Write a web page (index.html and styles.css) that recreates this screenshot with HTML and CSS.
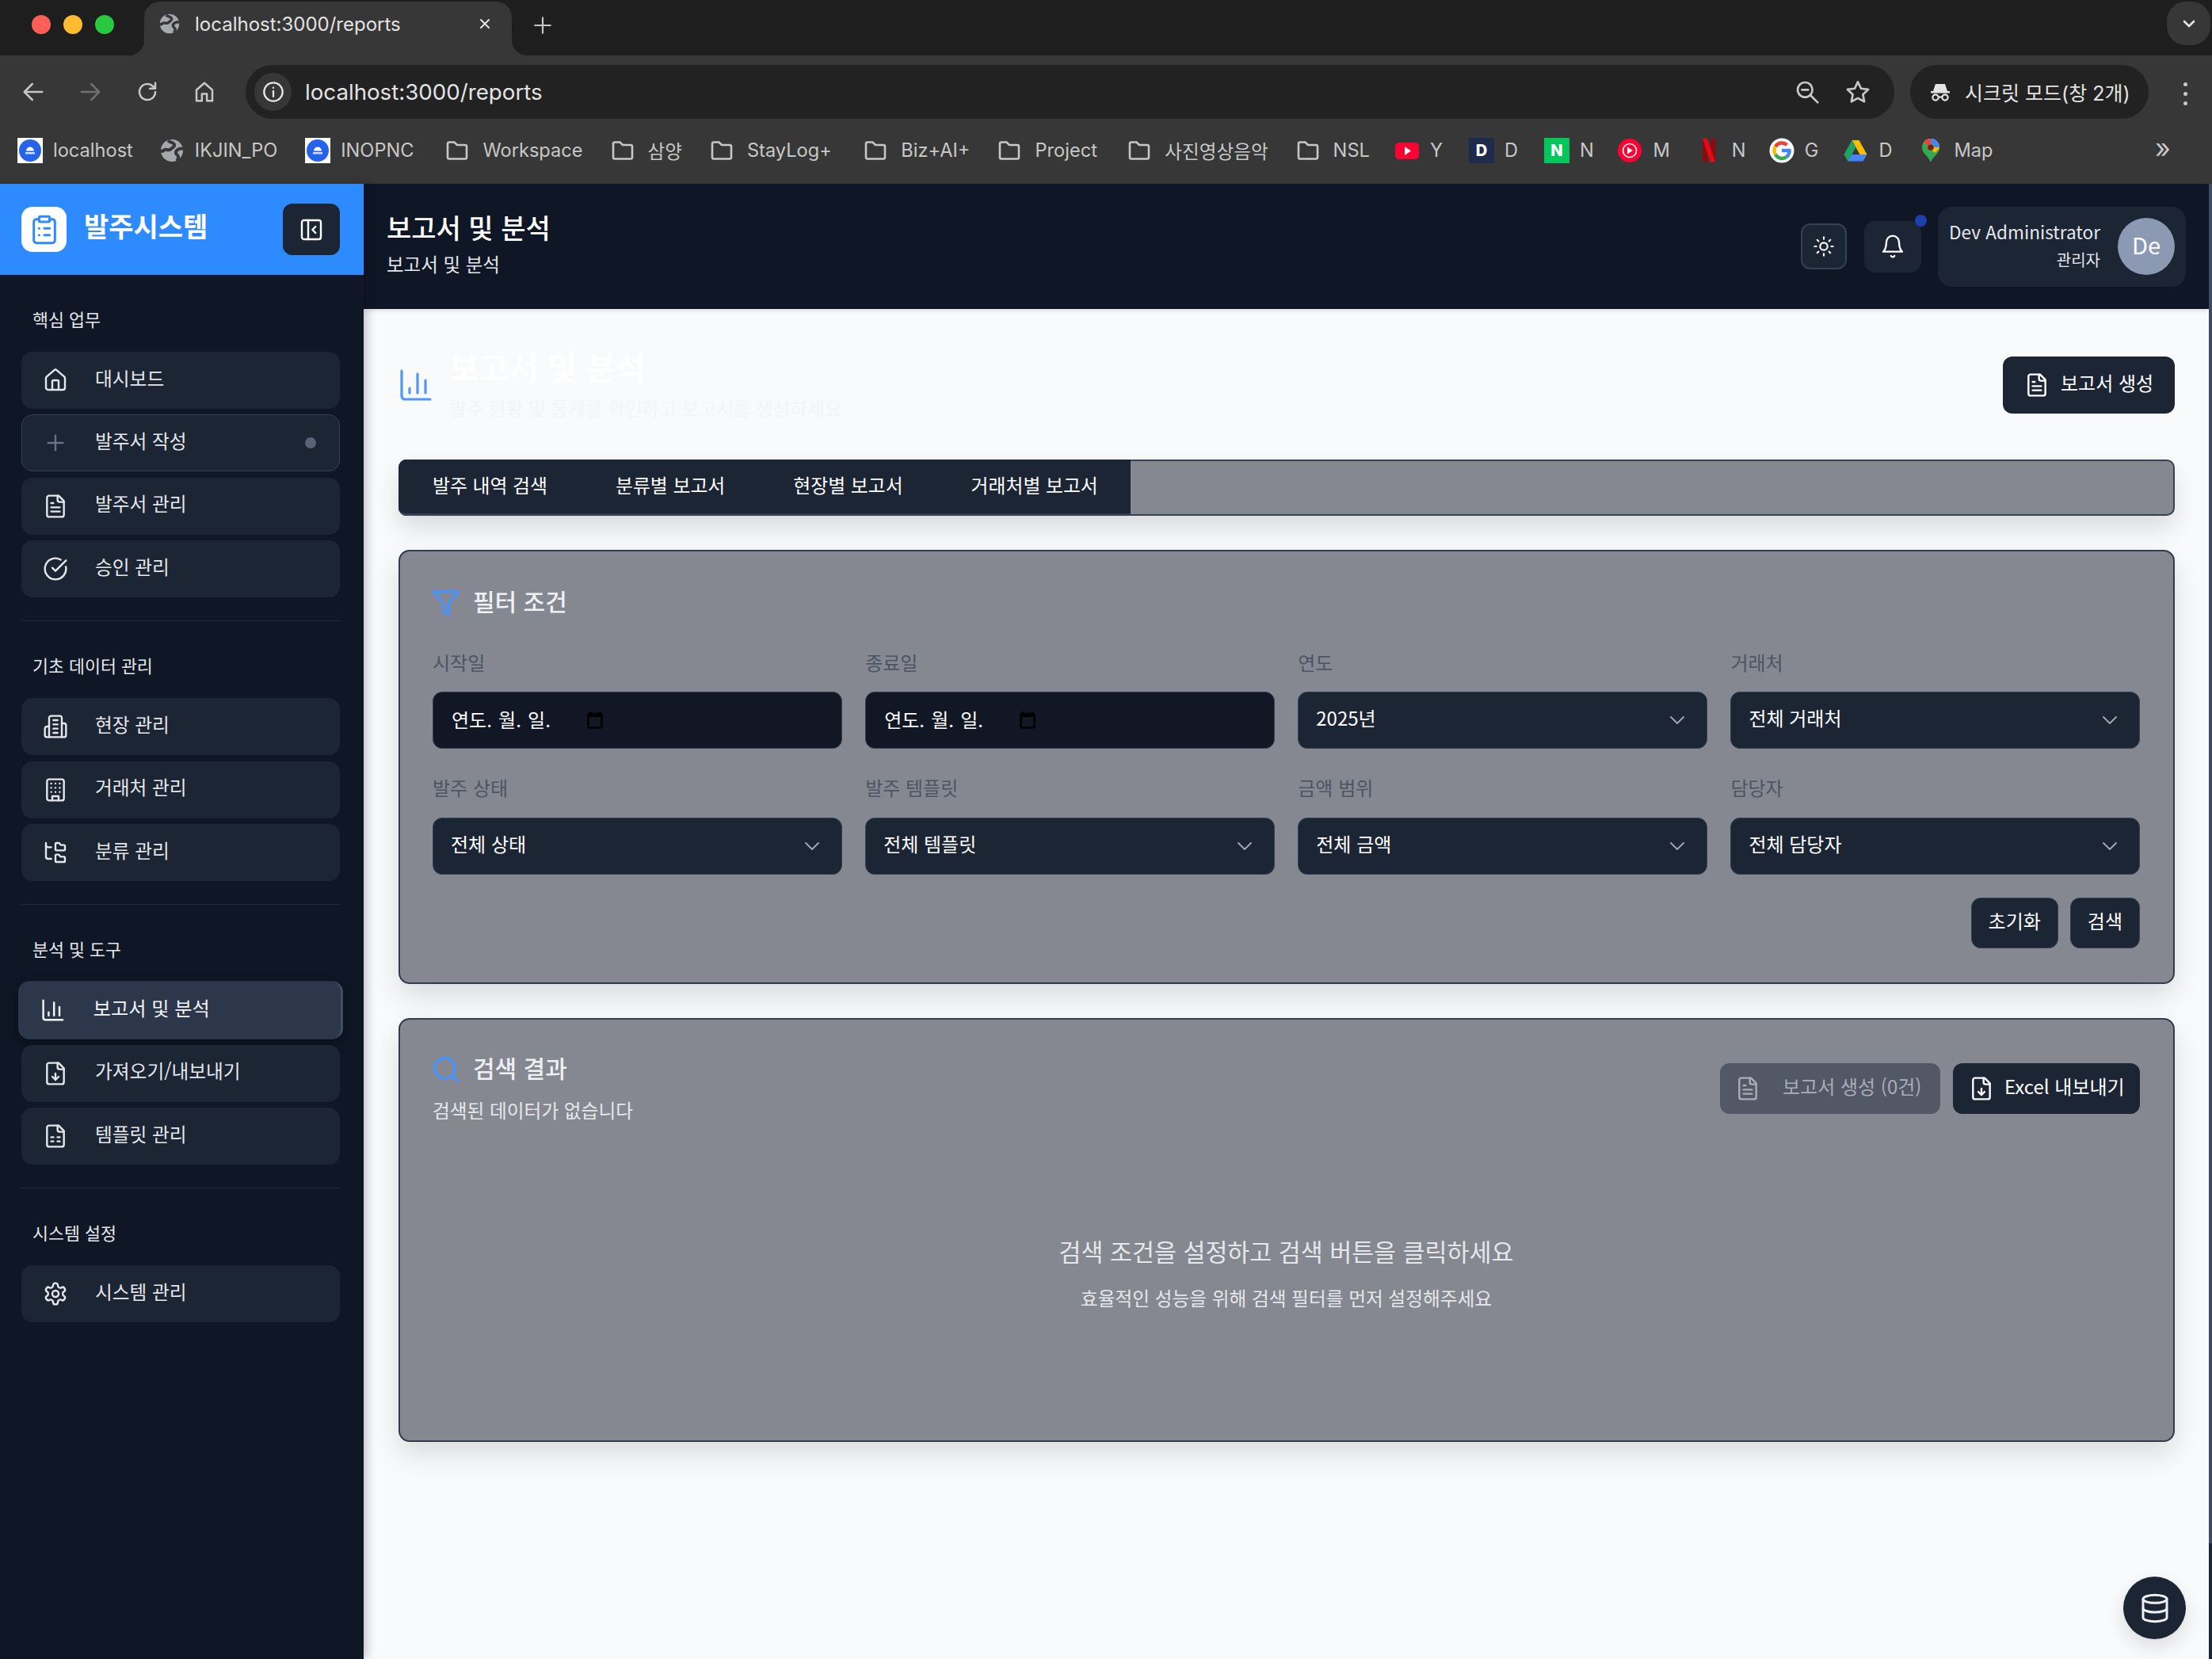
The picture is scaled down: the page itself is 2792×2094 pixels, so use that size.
FILE: index.html
```html
<!DOCTYPE html>
<html lang="ko">
<head>
<meta charset="utf-8">
<title>localhost:3000/reports</title>
<link rel="stylesheet" href="styles.css">
</head>
<body>
<svg class="defs" width="0" height="0">
  <symbol id="i-home" viewBox="0 0 24 24"><path d="M15 21v-8a1 1 0 0 0-1-1h-4a1 1 0 0 0-1 1v8"/><path d="M3 10a2 2 0 0 1 .709-1.528l7-5.999a2 2 0 0 1 2.582 0l7 5.999A2 2 0 0 1 21 10v9a2 2 0 0 1-2 2H5a2 2 0 0 1-2-2z"/></symbol>
  <symbol id="i-plus" viewBox="0 0 24 24"><path d="M5 12h14"/><path d="M12 5v14"/></symbol>
  <symbol id="i-file" viewBox="0 0 24 24"><path d="M15 2H6a2 2 0 0 0-2 2v16a2 2 0 0 0 2 2h12a2 2 0 0 0 2-2V7Z"/><path d="M14 2v4a2 2 0 0 0 2 2h4"/><path d="M10 9H8"/><path d="M16 13H8"/><path d="M16 17H8"/></symbol>
  <symbol id="i-check" viewBox="0 0 24 24"><path d="M21.801 10A10 10 0 1 1 17 3.335"/><path d="m9 11 3 3L22 4"/></symbol>
  <symbol id="i-building2" viewBox="0 0 24 24"><path d="M6 22V4a2 2 0 0 1 2-2h8a2 2 0 0 1 2 2v18Z"/><path d="M6 12H4a2 2 0 0 0-2 2v6a2 2 0 0 0 2 2h2"/><path d="M18 9h2a2 2 0 0 1 2 2v9a2 2 0 0 1-2 2h-2"/><path d="M10 6h4"/><path d="M10 10h4"/><path d="M10 14h4"/><path d="M10 18h4"/></symbol>
  <symbol id="i-building" viewBox="0 0 24 24"><rect width="16" height="20" x="4" y="2" rx="2" ry="2"/><path d="M9 22v-4h6v4"/><path d="M8 6h.01"/><path d="M16 6h.01"/><path d="M12 6h.01"/><path d="M12 10h.01"/><path d="M12 14h.01"/><path d="M16 10h.01"/><path d="M16 14h.01"/><path d="M8 10h.01"/><path d="M8 14h.01"/></symbol>
  <symbol id="i-tree" viewBox="0 0 24 24"><path d="M20 10a1 1 0 0 0 1-1V6a1 1 0 0 0-1-1h-2.5a1 1 0 0 1-.8-.4l-.9-1.2A1 1 0 0 0 15 3h-2a1 1 0 0 0-1 1v5a1 1 0 0 0 1 1Z"/><path d="M20 21a1 1 0 0 0 1-1v-3a1 1 0 0 0-1-1h-2.9a1 1 0 0 1-.88-.55l-.42-.85a1 1 0 0 0-.92-.6H13a1 1 0 0 0-1 1v5a1 1 0 0 0 1 1Z"/><path d="M3 5a2 2 0 0 0 2 2h3"/><path d="M3 3v13a2 2 0 0 0 2 2h3"/></symbol>
  <symbol id="i-chart" viewBox="0 0 24 24"><path d="M3 3v16a2 2 0 0 0 2 2h16"/><path d="M18 17V9"/><path d="M13 17V5"/><path d="M8 17v-3"/></symbol>
  <symbol id="i-filedown" viewBox="0 0 24 24"><path d="M15 2H6a2 2 0 0 0-2 2v16a2 2 0 0 0 2 2h12a2 2 0 0 0 2-2V7Z"/><path d="M14 2v4a2 2 0 0 0 2 2h4"/><path d="M12 18v-6"/><path d="m9 15 3 3 3-3"/></symbol>
  <symbol id="i-filesheet" viewBox="0 0 24 24"><path d="M15 2H6a2 2 0 0 0-2 2v16a2 2 0 0 0 2 2h12a2 2 0 0 0 2-2V7Z"/><path d="M14 2v4a2 2 0 0 0 2 2h4"/><path d="M8 13h2"/><path d="M14 13h2"/><path d="M8 17h2"/><path d="M14 17h2"/></symbol>
  <symbol id="i-gear" viewBox="0 0 24 24"><path d="M12.22 2h-.44a2 2 0 0 0-2 2v.18a2 2 0 0 1-1 1.73l-.43.25a2 2 0 0 1-2 0l-.15-.08a2 2 0 0 0-2.73.73l-.22.38a2 2 0 0 0 .73 2.73l.15.1a2 2 0 0 1 1 1.72v.51a2 2 0 0 1-1 1.74l-.15.09a2 2 0 0 0-.73 2.73l.22.38a2 2 0 0 0 2.73.73l.15-.08a2 2 0 0 1 2 0l.43.25a2 2 0 0 1 1 1.73V20a2 2 0 0 0 2 2h.44a2 2 0 0 0 2-2v-.18a2 2 0 0 1 1-1.73l.43-.25a2 2 0 0 1 2 0l.15.08a2 2 0 0 0 2.73-.73l.22-.39a2 2 0 0 0-.73-2.73l-.15-.08a2 2 0 0 1-1-1.74v-.5a2 2 0 0 1 1-1.74l.15-.09a2 2 0 0 0 .73-2.73l-.22-.38a2 2 0 0 0-2.73-.73l-.15.08a2 2 0 0 1-2 0l-.43-.25a2 2 0 0 1-1-1.73V4a2 2 0 0 0-2-2z"/><circle cx="12" cy="12" r="3"/></symbol>
  <symbol id="i-clipboard" viewBox="0 0 24 24"><rect width="8" height="4" x="8" y="2" rx="1" ry="1"/><path d="M16 4h2a2 2 0 0 1 2 2v14a2 2 0 0 1-2 2H6a2 2 0 0 1-2-2V6a2 2 0 0 1 2-2h2"/><path d="M12 11h4"/><path d="M12 16h4"/><path d="M8 11h.01"/><path d="M8 16h.01"/></symbol>
  <symbol id="i-panel" viewBox="0 0 24 24"><rect width="18" height="18" x="3" y="3" rx="2"/><path d="M9 3v18"/><path d="m16 15-3-3 3-3"/></symbol>
  <symbol id="i-sun" viewBox="0 0 24 24"><circle cx="12" cy="12" r="4"/><path d="M12 2v2"/><path d="M12 20v2"/><path d="m4.93 4.93 1.41 1.41"/><path d="m17.66 17.66 1.41 1.41"/><path d="M2 12h2"/><path d="M20 12h2"/><path d="m6.34 17.66-1.41 1.41"/><path d="m19.07 4.93-1.41 1.41"/></symbol>
  <symbol id="i-bell" viewBox="0 0 24 24"><path d="M6 8a6 6 0 0 1 12 0c0 7 3 9 3 9H3s3-2 3-9"/><path d="M10.3 21a1.94 1.94 0 0 0 3.4 0"/></symbol>
  <symbol id="i-filter" viewBox="0 0 24 24"><polygon points="22 3 2 3 10 12.46 10 19 14 21 14 12.46 22 3"/></symbol>
  <symbol id="i-search" viewBox="0 0 24 24"><circle cx="11" cy="11" r="8"/><path d="m21 21-4.3-4.3"/></symbol>
  <symbol id="i-db" viewBox="0 0 24 24"><ellipse cx="12" cy="5" rx="9" ry="3"/><path d="M3 5V19A9 3 0 0 0 21 19V5"/><path d="M3 12A9 3 0 0 0 21 12"/></symbol>
  <symbol id="i-chev" viewBox="0 0 24 24"><path d="m6 9 6 6 6-6"/></symbol>
  <symbol id="i-folder" viewBox="0 0 32 32"><path d="M5 7.5a2 2 0 0 1 2-2h6.5l3.5 3.5h10a2 2 0 0 1 2 2v13.500a2 2 0 0 1-2 2H7a2 2 0 0 1-2-2z"/></symbol>
  <symbol id="i-globe" viewBox="0 0 32 32"><circle cx="16" cy="16" r="14" fill="#a5a9ae"/><path d="M11 3.500c3 2.500 7 2 8 5s-3 4-5 6-6-1-8 1-3 2-4.500 0M30 14c-3-1-6 0-8 2s-1 4 1 6 1 5-1 7" fill="none" stroke="#373737" stroke-width="4"/></symbol>
  <symbol id="i-local" viewBox="0 0 32 32"><rect width="32" height="32" fill="#fff"/><circle cx="16" cy="16" r="14" fill="#2563eb"/><path d="M11 16.500a5 5 0 0 1 10 0z" fill="#fff"/><rect x="10" y="18" width="12" height="2.500" fill="#cfe0ff"/></symbol>
</svg>

<header class="tabstrip">
  <div class="lights"><span class="light red"></span><span class="light amber"></span><span class="light green"></span></div>
  <div class="tab">
    <svg class="fav"><use href="#i-globe"/></svg>
    <span class="tab-title">localhost:3000/reports</span>
    <svg class="tab-x icon" viewBox="0 0 24 24"><path d="M6 6l12 12M18 6 6 18"/></svg>
  </div>
  <svg class="tab-new icon" viewBox="0 0 24 24"><path d="M12 3v18M3 12h18"/></svg>
  <div class="tab-menu"><svg class="icon" viewBox="0 0 24 24"><path d="m6 9 6 6 6-6"/></svg></div>
</header>

<section class="toolbar">
  <div class="navrow">
    <svg class="nav icon" viewBox="0 0 24 24"><path d="M21 12H4M11 4l-8 8 8 8"/></svg>
    <svg class="nav icon dim" viewBox="0 0 24 24"><path d="M3 12h17M13 4l8 8-8 8"/></svg>
    <svg class="nav icon" viewBox="0 0 24 24"><path d="M20 12a8 8 0 1 1-2.500-5.800L20 8.500M20 3v5.500h-5.500"/></svg>
    <svg class="nav icon" viewBox="0 0 24 24"><path d="M4 21V10l8-7 8 7v11h-5.500v-7h-5v7z"/></svg>
    <div class="omni">
      <span class="omni-info"><svg class="icon" viewBox="0 0 24 24"><circle cx="12" cy="12" r="10"/><path d="M12 11v6M12 7.500v.01"/></svg></span>
      <span class="omni-url">localhost:3000/reports</span>
      <svg class="omni-act icon" viewBox="0 0 24 24"><circle cx="10" cy="10" r="7"/><path d="M7 10h6M15 15l7 7"/></svg>
      <svg class="omni-act star icon" viewBox="0 0 24 24"><path d="m12 2.500 3 6.300 6.800.9-5 4.700 1.300 6.800-6.100-3.300-6.100 3.300 1.300-6.800-5-4.700 6.800-.9z"/></svg>
    </div>
    <div class="incog">
      <svg class="incog-i" viewBox="0 0 28 28"><path d="M5 13 8 4h12l3 9z" fill="#e3e3e3"/><rect x="2" y="13" width="24" height="2.500" fill="#e3e3e3"/><circle cx="8" cy="21" r="3.600" fill="none" stroke="#e3e3e3" stroke-width="2.200"/><circle cx="20" cy="21" r="3.600" fill="none" stroke="#e3e3e3" stroke-width="2.200"/><path d="M11.500 20.500h5" stroke="#e3e3e3" stroke-width="2.200"/></svg>
      <span>시크릿 모드(창 2개)</span>
    </div>
    <div class="kebab"><i></i><i></i><i></i></div>
  </div>
  <nav class="bookmarks">
    <a class="bm"><svg class="bm-i"><use href="#i-local"/></svg>localhost</a>
    <a class="bm"><svg class="bm-i"><use href="#i-globe"/></svg>IKJIN_PO</a>
    <a class="bm"><svg class="bm-i"><use href="#i-local"/></svg>INOPNC</a>
    <a class="bm bm-folder"><svg class="bm-i folder"><use href="#i-folder"/></svg>Workspace</a>
    <a class="bm bm-folder"><svg class="bm-i folder"><use href="#i-folder"/></svg>삼양</a>
    <a class="bm bm-folder"><svg class="bm-i folder"><use href="#i-folder"/></svg>StayLog+</a>
    <a class="bm bm-folder"><svg class="bm-i folder"><use href="#i-folder"/></svg>Biz+AI+</a>
    <a class="bm bm-folder"><svg class="bm-i folder"><use href="#i-folder"/></svg>Project</a>
    <a class="bm bm-folder"><svg class="bm-i folder"><use href="#i-folder"/></svg>사진영상음악</a>
    <a class="bm bm-folder"><svg class="bm-i folder"><use href="#i-folder"/></svg>NSL</a>
    <a class="bm"><svg class="bm-i" viewBox="0 0 32 32"><rect x="1" y="6" width="30" height="21" rx="5" fill="#ff0033"/><path d="m13 11 8 5.500-8 5.500z" fill="#fff"/></svg>Y</a>
    <a class="bm"><span class="bm-i letter navy">D</span>D</a>
    <a class="bm"><span class="bm-i letter naver">N</span>N</a>
    <a class="bm"><svg class="bm-i" viewBox="0 0 32 32"><circle cx="16" cy="16" r="15" fill="#ff0033"/><circle cx="16" cy="16" r="8.500" fill="none" stroke="#fff" stroke-width="1.600"/><path d="m13 11.500 7 4.500-7 4.500z" fill="#fff"/></svg>M</a>
    <a class="bm"><svg class="bm-i" viewBox="0 0 32 32"><path d="M8 1h6v30l-6-1z" fill="#8f0a10"/><path d="M18 1h6v29l-6 1z" fill="#8f0a10"/><path d="M8 1h6l10 29-6 1z" fill="#e50914"/></svg>N</a>
    <a class="bm"><svg class="bm-i" viewBox="0 0 32 32"><circle cx="16" cy="16" r="15.500" fill="#fff"/><g fill="none" stroke-width="4.500"><path d="M8 11a9.500 9.500 0 0 1 14.500-2" stroke="#ea4335"/><path d="M8 11a9.500 9.500 0 0 0 0 10" stroke="#fbbc05"/><path d="M8 21a9.500 9.500 0 0 0 14 3" stroke="#34a853"/><path d="M22 24a9.500 9.500 0 0 0 3.500-8H16" stroke="#4285f4"/></g></svg>G</a>
    <a class="bm"><svg class="bm-i" viewBox="0 0 32 32"><path d="M11.500 3h9l10 18h-9z" fill="#fbbc04"/><path d="M11.500 3 1.500 21l5 8.500L16.500 12z" fill="#1fa463"/><path d="M6.500 29.500h19l5-8.500H11z" fill="#4285f4"/></svg>D</a>
    <a class="bm"><svg class="bm-i" viewBox="0 0 32 32"><path d="M16 1a11 11 0 0 0-11 11c0 8 8 11 11 19 3-8 11-11 11-19A11 11 0 0 0 16 1z" fill="#34a853"/><path d="M16 1a11 11 0 0 0-8.500 4L21 19c3-3 6-4 6-7A11 11 0 0 0 16 1z" fill="#fbbc04"/><path d="M16 1a11 11 0 0 1 11 11l-7 0a4 4 0 0 0-4-4z" fill="#4285f4"/><path d="M16 1a11 11 0 0 0-8.500 4l5.500 6a4 4 0 0 1 3-3z" fill="#ea4335"/><circle cx="16" cy="12" r="3.800" fill="#7a1c12"/></svg>Map</a>
    <span class="bm-more">»</span>
  </nav>
</section>

<div class="app">
  <aside class="sidebar">
    <div class="brand">
      <span class="logo"><svg class="icon logo-i"><use href="#i-clipboard"/></svg></span>
      <strong class="brand-name">발주시스템</strong>
      <span class="collapse"><svg class="icon i32"><use href="#i-panel"/></svg></span>
    </div>
    <nav class="menu">
      <section class="group">
        <h3 class="group-title">핵심 업무</h3>
        <ul class="items">
          <li class="item"><svg class="icon i32"><use href="#i-home"/></svg><span>대시보드</span></li>
          <li class="item outlined"><svg class="icon i32 muted"><use href="#i-plus"/></svg><span>발주서 작성</span><i class="item-dot"></i></li>
          <li class="item"><svg class="icon i32"><use href="#i-file"/></svg><span>발주서 관리</span></li>
          <li class="item"><svg class="icon i32"><use href="#i-check"/></svg><span>승인 관리</span></li>
        </ul>
      </section>
      <section class="group">
        <h3 class="group-title">기초 데이터 관리</h3>
        <ul class="items">
          <li class="item"><svg class="icon i32"><use href="#i-building2"/></svg><span>현장 관리</span></li>
          <li class="item"><svg class="icon i32"><use href="#i-building"/></svg><span>거래처 관리</span></li>
          <li class="item"><svg class="icon i32"><use href="#i-tree"/></svg><span>분류 관리</span></li>
        </ul>
      </section>
      <section class="group">
        <h3 class="group-title">분석 및 도구</h3>
        <ul class="items">
          <li class="item active"><svg class="icon i32"><use href="#i-chart"/></svg><span>보고서 및 분석</span></li>
          <li class="item"><svg class="icon i32"><use href="#i-filedown"/></svg><span>가져오기/내보내기</span></li>
          <li class="item"><svg class="icon i32"><use href="#i-filesheet"/></svg><span>템플릿 관리</span></li>
        </ul>
      </section>
      <section class="group last">
        <h3 class="group-title">시스템 설정</h3>
        <ul class="items">
          <li class="item"><svg class="icon i32"><use href="#i-gear"/></svg><span>시스템 관리</span></li>
        </ul>
      </section>
    </nav>
  </aside>

  <div class="main">
    <header class="topbar">
      <div class="topbar-titles">
        <h1 class="topbar-title">보고서 및 분석</h1>
        <p class="topbar-sub">보고서 및 분석</p>
      </div>
      <div class="topbar-actions">
        <span class="theme-btn"><svg class="icon i28"><use href="#i-sun"/></svg></span>
        <span class="bell-btn"><svg class="icon i32"><use href="#i-bell"/></svg><i class="bell-dot"></i></span>
        <div class="user">
          <div class="user-text"><span class="user-name">Dev Administrator</span><span class="user-role">관리자</span></div>
          <span class="avatar">De</span>
        </div>
      </div>
    </header>

    <main class="content">
      <div class="page-head">
        <svg class="icon page-icon"><use href="#i-chart"/></svg>
        <div class="page-titles">
          <h2 class="page-title">보고서 및 분석</h2>
          <p class="page-sub">발주 현황 및 통계를 확인하고 보고서를 생성하세요</p>
        </div>
        <button class="btn btn-head"><svg class="icon i32"><use href="#i-file"/></svg><span>보고서 생성</span></button>
      </div>

      <div class="tabs">
        <div class="tablist">
          <span class="tabitem">발주 내역 검색</span>
          <span class="tabitem">분류별 보고서</span>
          <span class="tabitem">현장별 보고서</span>
          <span class="tabitem">거래처별 보고서</span>
        </div>
      </div>

      <section class="card filter-card">
        <h3 class="card-title"><svg class="icon blue"><use href="#i-filter"/></svg><span>필터 조건</span></h3>
        <div class="filter-grid">
          <div class="field"><label class="field-label">시작일</label><div class="control date"><span>연도. 월. 일.</span><svg class="cal" viewBox="0 0 20 22"><path d="M4 0v3M16 0v3" stroke="#000" stroke-width="2.500"/><rect x="1.500" y="3" width="17" height="17.500" rx="1.500" fill="none" stroke="#000" stroke-width="2.500"/><rect x="1.500" y="3" width="17" height="4" fill="#000"/></svg></div></div>
          <div class="field"><label class="field-label">종료일</label><div class="control date"><span>연도. 월. 일.</span><svg class="cal" viewBox="0 0 20 22"><path d="M4 0v3M16 0v3" stroke="#000" stroke-width="2.500"/><rect x="1.500" y="3" width="17" height="17.500" rx="1.500" fill="none" stroke="#000" stroke-width="2.500"/><rect x="1.500" y="3" width="17" height="4" fill="#000"/></svg></div></div>
          <div class="field"><label class="field-label">연도</label><div class="control select"><span>2025년</span><svg class="icon chev"><use href="#i-chev"/></svg></div></div>
          <div class="field"><label class="field-label">거래처</label><div class="control select"><span>전체 거래처</span><svg class="icon chev"><use href="#i-chev"/></svg></div></div>
          <div class="field"><label class="field-label">발주 상태</label><div class="control select"><span>전체 상태</span><svg class="icon chev"><use href="#i-chev"/></svg></div></div>
          <div class="field"><label class="field-label">발주 템플릿</label><div class="control select"><span>전체 템플릿</span><svg class="icon chev"><use href="#i-chev"/></svg></div></div>
          <div class="field"><label class="field-label">금액 범위</label><div class="control select"><span>전체 금액</span><svg class="icon chev"><use href="#i-chev"/></svg></div></div>
          <div class="field"><label class="field-label">담당자</label><div class="control select"><span>전체 담당자</span><svg class="icon chev"><use href="#i-chev"/></svg></div></div>
        </div>
        <div class="filter-actions">
          <button class="btn btn-sm"><span>초기화</span></button>
          <button class="btn btn-sm"><span>검색</span></button>
        </div>
      </section>

      <section class="card result-card">
        <div class="result-head">
          <div>
            <h3 class="card-title result-title"><svg class="icon blue"><use href="#i-search"/></svg><span>검색 결과</span></h3>
            <p class="result-sub">검색된 데이터가 없습니다</p>
          </div>
          <div class="result-actions">
            <button class="btn btn-disabled"><svg class="icon i32"><use href="#i-file"/></svg><span>보고서 생성 (0건)</span></button>
            <button class="btn btn-excel"><svg class="icon i32"><use href="#i-filedown"/></svg><span>Excel 내보내기</span></button>
          </div>
        </div>
        <div class="empty">
          <p class="empty-main">검색 조건을 설정하고 검색 버튼을 클릭하세요</p>
          <p class="empty-sub">효율적인 성능을 위해 검색 필터를 먼저 설정해주세요</p>
        </div>
      </section>
    </main>
  </div>

  <div class="scrollbar"><div class="scroll-thumb"></div></div>
</div>

<button class="db-fab"><svg class="icon i40"><use href="#i-db"/></svg></button>
</body>
</html>
```
FILE: styles.css
```css
* { box-sizing: border-box; }
html, body { margin: 0; padding: 0; }
body {
  width: 2792px; height: 2094px; overflow: hidden; position: relative;
  font-family: "Noto Sans CJK KR", "Noto Sans", sans-serif;
  background: #f8fafc; color: #fff;
  display: flex; flex-direction: column;
}
h1, h2, h3, p, ul { margin: 0; padding: 0; list-style: none; }
.defs { position: absolute; }
.icon { fill: none; stroke: currentColor; stroke-width: 1.8; stroke-linecap: round; stroke-linejoin: round; flex: none; }
.i28 { width: 28px; height: 28px; }
.i32 { width: 32px; height: 32px; }
.i40 { width: 40px; height: 40px; }
.blue { width: 38px; height: 38px; color: #4a93fb; stroke-width: 2.2; margin-left: -2px; }
.muted { color: #64748b; }

/* browser chrome */
.tabstrip { height: 70px; background: #1e1e1e; display: flex; align-items: flex-start; padding-top: 2px; flex: none; position: relative; font-family: Inter, "Noto Sans CJK KR", sans-serif; }
.lights { display: flex; gap: 16px; margin: 17px 0 0 40px; width: 142px; }
.light { width: 24px; height: 24px; border-radius: 50%; }
.red { background: #ff5f57; } .amber { background: #febc2e; } .green { background: #28c840; }
.tab { width: 464px; height: 68px; background: #373737; border-radius: 20px 20px 0 0; display: flex; align-items: center; padding: 0 0 12px 18px; position: relative; color: #e3e3e3; }
.tab::before, .tab::after { content: ""; position: absolute; bottom: 0; width: 20px; height: 20px; }
.tab::before { left: -20px; background: radial-gradient(circle at 0 0, #1e1e1e 20px, #373737 20.5px); }
.tab::after { right: -20px; background: radial-gradient(circle at 100% 0, #1e1e1e 20px, #373737 20.5px); }
.fav { width: 28px; height: 32px; flex: none; }
.tab-title { margin-left: 18px; font-size: 24px; width: 353px; white-space: nowrap; }
.tab-x { width: 20px; height: 20px; stroke-width: 2.4; margin-left: 3px; }
.tab-new { width: 26px; height: 26px; margin: 17px 0 0 26px; color: #c7c7c7; stroke-width: 2; }
.tab-menu { position: absolute; right: 2px; top: 2px; width: 55px; height: 55px; border-radius: 24px; background: #373737; display: flex; align-items: center; justify-content: center; color: #e3e3e3; }
.tab-menu .icon { width: 24px; height: 24px; stroke-width: 2.6; }

.toolbar { height: 162px; background: #373737; flex: none; display: flex; flex-direction: column; font-family: Inter, "Noto Sans CJK KR", sans-serif; }
.navrow { height: 80px; padding: 12px 0 0 27px; display: flex; align-items: flex-start; }
.nav { width: 30px; height: 30px; margin: 19px 42px 0 0; color: #c7c7c7; stroke-width: 2; }
.nav.dim { color: #6f6f6f; }
.nav:nth-child(4) { margin-right: 37px; }
.omni { width: 2081px; height: 68px; border-radius: 34px; background: #222; display: flex; align-items: center; padding-left: 11px; }
.omni-info { width: 47px; height: 48px; border-radius: 24px; background: #373737; display: flex; align-items: center; justify-content: center; color: #e3e3e3; }
.omni-info .icon { width: 28px; height: 28px; stroke-width: 2; }
.omni-url { margin-left: 17px; font-size: 27.7px; color: #e3e3e3; flex: 1; white-space: nowrap; }
.omni-act { width: 32px; height: 32px; color: #c7c7c7; stroke-width: 2; margin-right: 32px; }
.omni-act.star { margin-right: 30px; }
.incog { width: 301px; height: 68px; margin-left: 20px; border-radius: 34px; background: #222; display: flex; align-items: center; padding-left: 24px; gap: 17px; font-size: 25px; color: #e3e3e3; white-space: nowrap; }
.incog-i { width: 28px; height: 28px; flex: none; }
.kebab { display: flex; flex-direction: column; gap: 7px; margin: 22px 0 0 44px; }
.kebab i { width: 5px; height: 5px; border-radius: 50%; background: #c7c7c7; }
.bookmarks { display: flex; align-items: center; gap: 33px; padding: 17px 0 0 22px; height: 62px; color: #c7c7c7; font-size: 23.6px; white-space: nowrap; position: relative; }
.bm { display: flex; align-items: center; gap: 13px; }
.bm-folder { gap: 17px; }
.bm:nth-child(3) { margin-left: 2px; }
.bm:nth-child(4) { margin-left: 5px; }
.bm:nth-child(7) { margin-left: 5.5px; }
.bm:nth-child(9) { margin-left: 3.5px; }
.bm:nth-child(11) { margin-left: -2px; }
.bm:nth-child(14) { margin-left: -3.3px; }
.bm:nth-child(16) { margin-left: -3.7px; }
.bm:nth-child(17) { margin-left: -2px; }
.bm-i { width: 32px; height: 32px; flex: none; }
.folder { fill: none; stroke: #c7c7c7; stroke-width: 2.600; }
.letter { display: flex; align-items: center; justify-content: center; color: #fff; font-weight: 800; font-size: 20px; }
.navy { background: #1f2b4d; }
.naver { background: #03c75a; }
.bm-more { position: absolute; left: 2720px; top: 17px; font-size: 34px; line-height: 40px; }

/* app */
.app { flex: 1; display: flex; min-height: 0; position: relative; }
.sidebar { width: 459px; flex: none; background: #0f1625; position: relative; z-index: 2; box-shadow: 4px 0 12px rgba(0,0,0,.22); }
.brand { height: 115px; background: #2e8aff; display: flex; align-items: center; padding: 0 30px 0 27px; }
.logo { width: 57px; height: 57px; border-radius: 14px; background: #fff; display: flex; align-items: center; justify-content: center; color: #2e8aff; }
.logo-i { width: 40px; height: 40px; }
.brand-name { margin-left: 22px; font-size: 34px; font-weight: 700; flex: 1; line-height: 1; padding-bottom: 9px; }
.collapse { width: 72px; height: 65px; border-radius: 12px; background: #1c2534; display: flex; align-items: center; justify-content: center; }
.menu { padding: 40.5px 30px 0 27px; display: flex; flex-direction: column; }
.group { padding-bottom: 29px; margin-bottom: 40.7px; border-bottom: 1px solid #1f2a40; }
.group.last { border: 0; }
.group-title { font-size: 21.7px; font-weight: 400; line-height: 30px; padding-left: 14px; margin-bottom: 26.5px; color: #e5e7eb; }
.items { display: flex; flex-direction: column; gap: 7.4px; }
.item { height: 72px; border-radius: 14px; background: #1c2534; display: flex; align-items: center; padding-left: 27px; gap: 34px; font-size: 23.7px; color: #e5e7eb; position: relative; }
.item span { padding-bottom: 7px; }
.outlined { border: 1px solid #334155; padding-left: 26px; }
.item-dot { position: absolute; right: 29px; top: 28px; width: 14px; height: 14px; border-radius: 50%; background: #566379; }
.active { background: #2c374b; transform: scale(1.02); box-shadow: 0 6px 14px rgba(0,0,0,.3); border-right: 3px solid #414e64; color: #f3f4f6; }

.main { flex: 1; min-width: 0; display: flex; flex-direction: column; background: #f8fafc; }
.topbar { height: 158px; background: #0f1625; display: flex; align-items: center; justify-content: space-between; padding: 0 29px 0 29px; box-shadow: 0 2px 6px rgba(0,0,0,.12); flex: none; }
.topbar-titles { display: flex; flex-direction: column; padding-bottom: 10px; }
.topbar-title { font-size: 34px; font-weight: 500; line-height: 50px; }
.topbar-sub { font-size: 23.5px; line-height: 34px; margin-top: 4px; color: #e5e7eb; }
.topbar-actions { display: flex; align-items: center; }
.theme-btn { width: 58px; height: 58px; border: 2px solid #334155; border-radius: 12px; background: #1c2534; display: flex; align-items: center; justify-content: center; }
.bell-btn { width: 72px; height: 65px; margin: 0 21px 0 22px; border-radius: 14px; background: #1c2534; display: flex; align-items: center; justify-content: center; position: relative; }
.bell-dot { position: absolute; right: -7px; top: -8px; width: 15px; height: 15px; border-radius: 50%; background: #1e40af; }
.user { width: 313px; height: 101px; border-radius: 18px; background: #1c2534; display: flex; align-items: center; justify-content: space-between; padding: 0 14px 0 15px; }
.user-text { display: flex; flex-direction: column; align-items: flex-end; width: 190px; padding-bottom: 5px; }
.user-name { font-size: 22.6px; line-height: 36px; white-space: nowrap; color: #e5e7eb; }
.user-role { font-size: 20px; line-height: 30px; margin-top: 2px; color: #e5e7eb; }
.avatar { width: 72px; height: 72px; border-radius: 50%; background: #8b9ab2; display: flex; align-items: center; justify-content: center; font-size: 29px; padding-bottom: 6px; }

.content { padding: 40px 43px 0 44px; flex: 1; min-height: 0; }
.page-head { height: 112px; display: flex; align-items: center; margin-bottom: 38px; }
.page-icon { width: 48px; height: 48px; color: #4f96fa; stroke-width: 1.6; margin-left: -2px; }
.page-titles { margin-left: 18px; flex: 1; padding-bottom: 6px; }
.page-title { font-size: 40.8px; font-weight: 700; line-height: 58px; color: #fff; }
.page-sub { font-size: 23.6px; line-height: 34px; margin-top: 6px; color: #f1f5f9; }

.btn { font: inherit; font-size: 24px; color: #fff; border: 0; background: #1c2534; border-radius: 12px; display: inline-flex; align-items: center; white-space: nowrap; padding: 0; }
.btn span { padding-bottom: 7px; }
.btn-head { height: 72px; width: 217px; padding-left: 27px; gap: 14px; }
.tabs { height: 71px; background: #858891; border: 2px solid #374151; border-radius: 10px; margin-bottom: 43px; box-shadow: 0 16px 30px rgba(0,0,0,.12); }
.tablist { display: inline-flex; background: #1c2534; border-bottom: 3px solid #334155; padding: 0 0 0 43px; gap: 86px; width: 924px; margin-top: -2px; margin-left: -2px; height: 71px; align-items: center; border-radius: 10px 0 0 10px; }
.tabitem { font-size: 23.85px; white-space: nowrap; padding-bottom: 6px; }

.card { background: #858891; border: 2px solid #323c4e; border-radius: 14px; box-shadow: 0 16px 34px rgba(0,0,0,.12); }
.filter-card { height: 548px; margin-bottom: 43px; padding: 41px 42px 0 41px; }
.card-title { display: flex; align-items: center; gap: 15px; font-size: 30px; font-weight: 500; line-height: 43px; height: 48px; color: #eef0f4; }
.card-title span { padding-bottom: 5px; }
.filter-grid { display: grid; grid-template-columns: repeat(4, 1fr); column-gap: 29.5px; row-gap: 32px; margin-top: 34px; }
.field-label { display: block; font-size: 24px; line-height: 34px; color: #4b5563; margin-bottom: 20px; }
.field:nth-child(n+5) .field-label { margin-bottom: 21px; }
.control { height: 72px; border-radius: 12px; border: 1px solid #334155; display: flex; align-items: center; font-size: 24px; }
.control span { padding-bottom: 7px; }
.date { background: #111725; padding-left: 23px; gap: 46px; }
.date span { word-spacing: 1.5px; padding-bottom: 4px; }
.cal { width: 20px; height: 22px; }
.select { background: #1c2534; padding: 0 21px 0 22px; justify-content: space-between; }
.chev { width: 32px; height: 32px; color: #a3a8b2; stroke-width: 1.4; }
.filter-actions { display: flex; justify-content: flex-end; gap: 15px; margin-top: 29px; }
.btn-sm { height: 64px; padding: 0 21px; border: 1px solid #334155; }

.result-card { height: 535px; padding: 41px 42px 0 41px; }
.result-title { line-height: 39px; height: 44px; }
.result-sub { font-size: 23.7px; line-height: 34px; margin-top: 12px; color: #e5e7eb; }
.result-head { display: flex; justify-content: space-between; align-items: flex-start; }
.result-actions { display: flex; gap: 16px; margin-top: 14px; }
.btn-disabled { height: 64px; width: 278px; padding-left: 19px; gap: 28px; background: #525866; color: #a9adb6; }
.btn-excel { height: 64px; width: 236px; padding-left: 20px; gap: 13px; }
.empty { text-align: center; margin-top: 137px; }
.empty-main { font-size: 30.4px; line-height: 48px; color: #e5e7eb; }
.empty-sub { font-size: 23.7px; line-height: 34px; margin-top: 18px; color: #e5e7eb; }

.scrollbar { width: 4px; flex: none; background: #1c2534; }
.scroll-thumb { height: 1716px; background: #3f4b60; }

.db-fab { position: absolute; left: 2680px; top: 1990px; width: 79px; height: 79px; border-radius: 50%; border: 0; padding: 0; background: #1c2534; color: #eef0f4; display: flex; align-items: center; justify-content: center; box-shadow: 0 10px 24px rgba(0,0,0,.12); z-index: 3; }
```
